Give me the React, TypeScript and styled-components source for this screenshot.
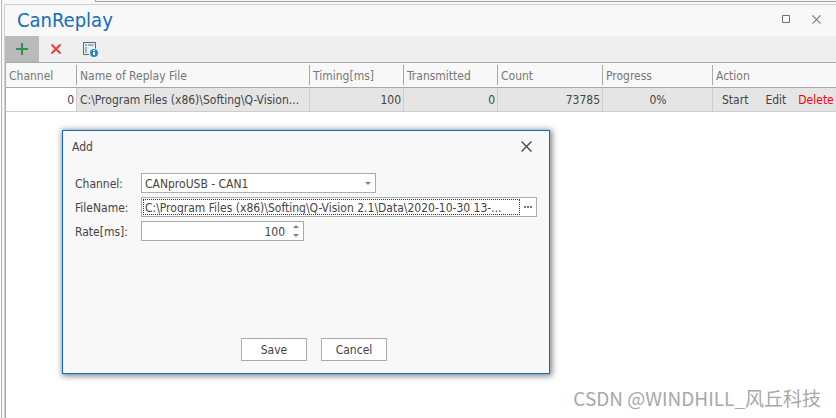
import React, { useState } from "react";
import styled, { createGlobalStyle } from "styled-components";

const GlobalStyle = createGlobalStyle`
  * { box-sizing: border-box; }
  body {
    margin: 0;
    background: #ffffff;
    color: #444444;
    font: 12px/16px "DejaVu Sans Condensed", "Noto Sans", sans-serif;
  }
  button, input, select { font: inherit; color: inherit; }
`;

const Frame = styled.div`
  min-height: 100vh;
  margin-left: 1px;
  padding-left: 2px;
  border-left: 1px solid #b4b4b4;
  display: flex;
  flex-direction: column;
  background: #f8f8f8;
`;

const TabEdge = styled.div`
  height: 2px;
  margin-left: 91px;
  border-left: 1px solid #a0a0a0;
  border-bottom: 1px solid #a0a0a0;
`;

const Panel = styled.main`
  flex: 1;
  display: flex;
  flex-direction: column;
  margin-top: 2px;
  border: 1px solid #cfcfcf;
  border-right: 0;
  border-bottom: 0;
  background: #f8f8f8;
  position: relative;
`;

const TitleBar = styled.header`
  height: 31px;
  display: flex;
  align-items: center;
  padding: 0 15px 2px 12px;
  gap: 21px;
`;

const Title = styled.h1`
  flex: 1;
  margin: 0;
  color: #106ebe;
  font-size: 20px;
  line-height: 28px;
  font-weight: 400;
`;

const IconButton = styled.button`
  display: flex;
  align-items: center;
  justify-content: center;
  padding: 0;
  border: 0;
  background: transparent;
  color: #707070;
`;

const Toolbar = styled.div`
  height: 26px;
  display: flex;
  background: #efefef;
`;

const ToolButton = styled(IconButton)<{ $active?: boolean }>`
  width: 34px;
  background: ${(p) => (p.$active ? "#bababa" : "transparent")};
`;

const GridArea = styled.section`
  flex: 1;
  background: #ffffff;
  border-left: 1px solid #b0b0b0;
  border-top: 1px solid #a8a8a8;
`;

const Grid = styled.table`
  width: 100%;
  table-layout: fixed;
  border-collapse: separate;
  border-spacing: 0;
`;

const HeadCell = styled.th`
  height: 25px;
  padding: 2px 0;
  background: #f8f8f8;
  border-bottom: 1px solid #a8a8a8;
  font-weight: 400;
  text-align: left;
  color: #777777;
`;

const HeadLabel = styled.div<{ $last?: boolean }>`
  height: 20px;
  padding-left: 3px;
  line-height: 22px;
  white-space: nowrap;
  border-right: ${(p) => (p.$last ? "0" : "1px solid #a8a8a8")};
`;

const Cell = styled.td<{ $align?: "left" | "right" | "center"; $plain?: boolean; $last?: boolean }>`
  height: 24px;
  padding: 0 2px 0 3px;
  text-align: ${(p) => p.$align ?? "left"};
  background: ${(p) => (p.$plain ? "#ffffff" : "#e5e5e5")};
  border-bottom: 1px solid #cdcdcd;
  border-right: ${(p) => (p.$last ? "0" : "1px solid #cdcdcd")};
  white-space: nowrap;
  overflow: hidden;
`;

const Actions = styled.div`
  display: flex;
  gap: 17px;
  padding-left: 6px;
`;

const TextButton = styled.button<{ $danger?: boolean }>`
  padding: 0;
  border: 0;
  background: transparent;
  color: ${(p) => (p.$danger ? "#ff0000" : "#444444")};
  &:last-child { margin-left: -5px; }
`;

const Dialog = styled.div`
  position: absolute;
  left: 57px;
  top: 125px;
  width: 488px;
  height: 244px;
  display: flex;
  flex-direction: column;
  background: #f8f8f8;
  border: 1px solid #106ebe;
  box-shadow: 1px 1px 6px 1px rgba(0, 0, 0, 0.5);
`;

const DialogHead = styled.div`
  height: 32px;
  display: flex;
  align-items: center;
  justify-content: space-between;
  padding: 0 17px 1px 9px;
`;

const DialogTitle = styled.h2`
  margin: 0;
  font-size: 12px;
  font-weight: 400;
`;

const Form = styled.form`
  flex: 1;
  display: flex;
  flex-direction: column;
  padding: 10px 12px 12px;
`;

const Fields = styled.div`
  flex: 1;
  display: grid;
  grid-template-columns: 66px 1fr;
  align-content: start;
  align-items: center;
  row-gap: 4px;
`;

const FieldLabel = styled.label`
  padding-top: 2px;
`;

const Box = styled.div<{ $width?: number }>`
  width: ${(p) => (p.$width ? `${p.$width}px` : "100%")};
  height: 20px;
  display: flex;
  align-items: center;
  position: relative;
  background: #ffffff;
  border: 1px solid #ababab;
`;

const Select = styled.select`
  flex: 1;
  height: 18px;
  padding: 1px 3px 0;
  border: 0;
  background: transparent;
  appearance: none;
  outline: 0;
`;

const SelectArrow = styled.svg`
  position: absolute;
  right: 4px;
  top: 8px;
  pointer-events: none;
`;

const FileInput = styled.input`
  flex: 1;
  min-width: 0;
  height: 16px;
  margin-left: 1px;
  padding: 1px 2px 0 1px;
  border: 1px dotted #333333;
  background: transparent;
  outline: 0;
`;

const RateInput = styled.input`
  flex: 1;
  min-width: 0;
  height: 18px;
  padding: 1px 3px 0;
  border: 0;
  background: transparent;
  text-align: right;
  outline: 0;
`;

const BrowseButton = styled(IconButton)`
  width: 16px;
  height: 18px;
`;

const Spinner = styled.div`
  width: 15px;
  display: flex;
  flex-direction: column;
`;

const SpinButton = styled(IconButton)`
  height: 9px;
`;

const Footer = styled.div`
  display: flex;
  justify-content: center;
  gap: 14px;
  padding-left: 16px;
`;

const PushButton = styled.button`
  width: 66px;
  height: 23px;
  padding: 0;
  background: #ffffff;
  border: 1px solid #ababab;
`;

const Watermark = styled.div`
  position: absolute;
  right: 15px;
  bottom: 6px;
  color: #a8a8a8;
  font: 400 19px/28px "Noto Sans CJK SC", sans-serif;
`;

const columns = [
  { name: "Channel", width: 71 },
  { name: "Name of Replay File", width: 233 },
  { name: "Timing[ms]", width: 94 },
  { name: "Transmitted", width: 94 },
  { name: "Count", width: 105 },
  { name: "Progress", width: 110 },
  { name: "Action", width: undefined },
];

const Cross = ({ size, color, weight = 1 }: { size: number; color: string; weight?: number }) => (
  <svg width={size} height={size} viewBox="0 0 10 10" stroke={color} strokeWidth={weight} fill="none">
    <path d="M.5.5l9 9M9.5.5l-9 9" />
  </svg>
);

export default function App() {
  const [channel, setChannel] = useState("CANproUSB - CAN1");
  const [file, setFile] = useState("C:\\Program Files (x86)\\Softing\\Q-Vision 2.1\\Data\\2020-10-30 13-...");
  const [rate, setRate] = useState("100");

  return (
    <>
      <GlobalStyle />
      <Frame>
        <TabEdge />
        <Panel>
          <TitleBar>
            <Title>CanReplay</Title>
            <IconButton aria-label="Maximize">
              <svg width="9" height="9" viewBox="0 0 9 9" fill="none" stroke="currentColor">
                <path d="M.5.5h7v7h-7z" />
              </svg>
            </IconButton>
            <IconButton aria-label="Close panel"><Cross size={9} color="#777777" weight={1.2} /></IconButton>
          </TitleBar>
          <Toolbar>
            <ToolButton $active aria-label="Add">
              <svg width="12" height="12" viewBox="0 0 12 12" fill="#309048">
                <path d="M5 0h2v5h5v2H7v5H5V7H0V5h5z" />
              </svg>
            </ToolButton>
            <ToolButton aria-label="Remove"><Cross size={10} color="#e8413d" weight={2} /></ToolButton>
            <ToolButton aria-label="Properties">
              <svg width="16" height="16" viewBox="0 0 16 16" fill="none">
                <path d="M7 13.5H1.5v-12h12v6" stroke="#626262" />
                <path d="M3 3h2v2H3zM6 3h6v2H6zM3 6h2v6H3z" fill="#83b9e2" />
                <circle cx="12" cy="12" r="4" fill="#2389cc" />
                <path d="M11 9h2v1h-2zM11 11h2v3h-2z" fill="#ffffff" />
              </svg>
            </ToolButton>
          </Toolbar>
          <GridArea>
            <Grid>
              <colgroup>
                {columns.map((c) => <col key={c.name} width={c.width} />)}
              </colgroup>
              <thead>
                <tr>
                  {columns.map((c, i) => (
                    <HeadCell key={c.name} scope="col">
                      <HeadLabel $last={i === columns.length - 1}>{c.name}</HeadLabel>
                    </HeadCell>
                  ))}
                </tr>
              </thead>
              <tbody>
                <tr>
                  <Cell $align="right" $plain>0</Cell>
                  <Cell>{"C:\\Program Files (x86)\\Softing\\Q-Vision..."}</Cell>
                  <Cell $align="right">100</Cell>
                  <Cell $align="right">0</Cell>
                  <Cell $align="right">73785</Cell>
                  <Cell $align="center">0%</Cell>
                  <Cell $last>
                    <Actions>
                      <TextButton>Start</TextButton>
                      <TextButton>Edit</TextButton>
                      <TextButton $danger>Delete</TextButton>
                    </Actions>
                  </Cell>
                </tr>
              </tbody>
            </Grid>
          </GridArea>
          <Dialog role="dialog" aria-labelledby="dialog-title">
            <DialogHead>
              <DialogTitle id="dialog-title">Add</DialogTitle>
              <IconButton aria-label="Close"><Cross size={11} color="#444444" weight={1.2} /></IconButton>
            </DialogHead>
            <Form onSubmit={(e) => e.preventDefault()}>
              <Fields>
                <FieldLabel htmlFor="channel">Channel:</FieldLabel>
                <Box $width={235}>
                  <Select id="channel" value={channel} onChange={(e) => setChannel(e.target.value)}>
                    <option>CANproUSB - CAN1</option>
                  </Select>
                  <SelectArrow width="6" height="3" viewBox="0 0 6 3" fill="#808080"><path d="M0 0h6L3 3z" /></SelectArrow>
                </Box>
                <FieldLabel htmlFor="file">FileName:</FieldLabel>
                <Box>
                  <FileInput id="file" value={file} onChange={(e) => setFile(e.target.value)} />
                  <BrowseButton type="button" aria-label="Browse">
                    <svg width="8" height="2" viewBox="0 0 8 2" fill="#777777"><path d="M0 0h2v2H0zM3 0h2v2H3zM6 0h2v2H6z" /></svg>
                  </BrowseButton>
                </Box>
                <FieldLabel htmlFor="rate">Rate[ms]:</FieldLabel>
                <Box $width={163}>
                  <RateInput id="rate" value={rate} onChange={(e) => setRate(e.target.value)} />
                  <Spinner>
                    <SpinButton type="button" aria-label="Increase" onClick={() => setRate(String(Number(rate) + 1))}>
                      <svg width="6" height="3" viewBox="0 0 6 3" fill="#808080"><path d="M0 3h6L3 0z" /></svg>
                    </SpinButton>
                    <SpinButton type="button" aria-label="Decrease" onClick={() => setRate(String(Number(rate) - 1))}>
                      <svg width="6" height="3" viewBox="0 0 6 3" fill="#808080"><path d="M0 0h6L3 3z" /></svg>
                    </SpinButton>
                  </Spinner>
                </Box>
              </Fields>
              <Footer>
                <PushButton type="submit">Save</PushButton>
                <PushButton type="button">Cancel</PushButton>
              </Footer>
            </Form>
          </Dialog>
          <Watermark>CSDN @WINDHILL_风丘科技</Watermark>
        </Panel>
      </Frame>
    </>
  );
}
